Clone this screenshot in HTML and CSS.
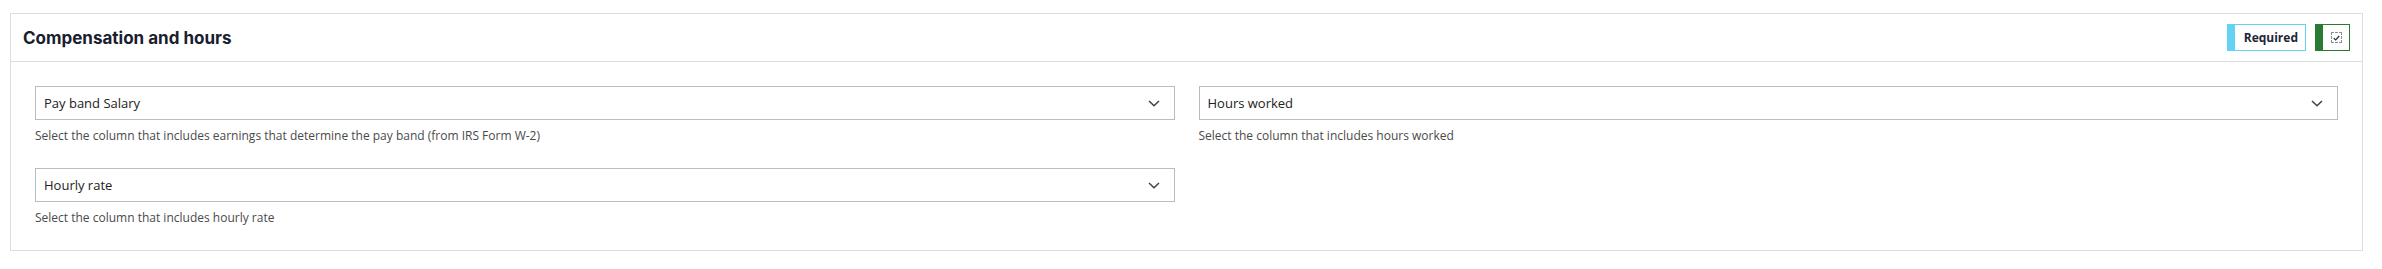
FILE: index.html
```html
<!DOCTYPE html>
<html lang="en">
<head>
  <meta charset="UTF-8" />
  <meta name="viewport" content="width=device-width, initial-scale=1.0" />
  <title>Compensation and hours</title>
  <link rel="stylesheet" href="styles.css">
</head>
<body>
  <div class="page">
    <section class="card">
      <header class="card-header">
        <h2>Compensation and hours</h2>
        <div class="header-actions">
          <span class="badge-required">Required</span>
          <button class="check-btn" type="button" aria-label="Mark complete">
            <span class="check-box">
              <svg width="7" height="6" viewBox="0 0 7 6"><path d="M0.8 3.2 L2.7 4.9 L6.2 1" fill="none" stroke="#2b3240" stroke-width="1.3"/></svg>
            </span>
          </button>
        </div>
      </header>

      <div class="card-body">
        <div class="field">
          <div class="dropdown">
            <span>Pay band Salary</span>
            <svg class="chevron" width="12" height="7" viewBox="0 0 12 7"><path d="M1 1 L6 5.8 L11 1" fill="none" stroke="#3b4350" stroke-width="1.5"/></svg>
          </div>
          <p class="hint">Select the column that includes earnings that determine the pay band (from IRS Form W-2)</p>
        </div>

        <div class="field">
          <div class="dropdown">
            <span>Hours worked</span>
            <svg class="chevron" width="12" height="7" viewBox="0 0 12 7"><path d="M1 1 L6 5.8 L11 1" fill="none" stroke="#3b4350" stroke-width="1.5"/></svg>
          </div>
          <p class="hint">Select the column that includes hours worked</p>
        </div>

        <div class="field">
          <div class="dropdown">
            <span>Hourly rate</span>
            <svg class="chevron" width="12" height="7" viewBox="0 0 12 7"><path d="M1 1 L6 5.8 L11 1" fill="none" stroke="#3b4350" stroke-width="1.5"/></svg>
          </div>
          <p class="hint">Select the column that includes hourly rate</p>
        </div>
      </div>
    </section>
  </div>
</body>
</html>
```

FILE: styles.css
```css
:root {
  --border: #dcdedf;
  --input-border: #bcbcbc;
  --title: #18202e;
  --text: #222;
  --hint: #4a4a4a;
  --cyan: #62d3f2;
  --green: #2a7a34;
}
body {
  margin: 0;
  background: #fff;
  font-family: 'Open Sans', 'Noto Sans', sans-serif;
  color: var(--text);
}
.page {
  padding: 13px 19px 0 10px;
}
.card {
  border: 1px solid var(--border);
  background: #fff;
}
.card-header {
  height: 47px;
  display: flex;
  align-items: center;
  justify-content: space-between;
  padding: 0 12px;
  border-bottom: 1px solid var(--border);
}
.card-header h2 {
  margin: 0;
  font-family: 'Inter', sans-serif;
  font-weight: 700;
  font-size: 17px;
  color: var(--title);
}
.header-actions {
  display: flex;
  align-items: center;
  gap: 9px;
}
.badge-required {
  box-sizing: border-box;
  height: 27px;
  display: flex;
  align-items: center;
  padding: 0 7px 0 9px;
  border: 1px solid var(--cyan);
  border-left: 8px solid var(--cyan);
  font-size: 12px;
  font-weight: 700;
  color: #1c2636;
}
.check-btn {
  box-sizing: border-box;
  width: 35px;
  height: 27px;
  padding: 0;
  margin: 0;
  background: #fff;
  border: 1px solid var(--green);
  border-left: 8px solid var(--green);
  display: flex;
  align-items: center;
  justify-content: center;
  cursor: pointer;
}
.check-box {
  box-sizing: border-box;
  width: 11px;
  height: 11px;
  border: 1px dashed #8a8f96;
  display: flex;
  align-items: center;
  justify-content: center;
}
.card-body {
  display: grid;
  grid-template-columns: 1fr 1fr;
  gap: 24px;
  padding: 24px 24px 24px;
}
.dropdown {
  box-sizing: border-box;
  height: 34px;
  border: 1px solid var(--input-border);
  display: flex;
  align-items: center;
  justify-content: space-between;
  padding: 0 14px 0 8px;
  font-size: 13px;
  color: var(--text);
}
.hint {
  margin: 7px 0 0;
  font-size: 12px;
  line-height: 17px;
  color: var(--hint);
}
```
